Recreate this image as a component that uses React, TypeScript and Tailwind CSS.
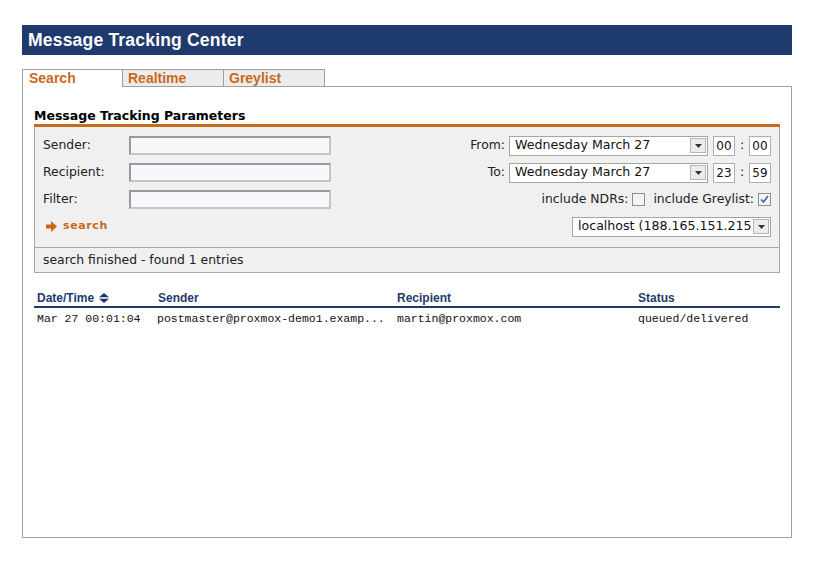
import React from "react";

const labelFont = "font-['DejaVu_Sans',sans-serif] text-[12.4px] text-[#222]";

function DropButton() {
  return (
    <div className="flex h-[15px] w-[16px] items-center justify-center border border-[#b5b5b5] bg-[#ececec]">
      <svg width="7" height="4" viewBox="0 0 7 4">
        <path d="M0 0 L7 0 L3.5 4 Z" fill="#333" />
      </svg>
    </div>
  );
}

function Select({ value, width }: { value: string; width: string }) {
  return (
    <div
      className={`flex h-[20px] items-center justify-between border border-[#a5a5a5] bg-white pl-[5px] pr-[1px] ${width} font-['DejaVu_Sans',sans-serif] text-[12.6px] text-[#111]`}
    >
      <span className="whitespace-nowrap">{value}</span>
      <DropButton />
    </div>
  );
}

function TimeBox({ value }: { value: string }) {
  return (
    <div className="flex h-[20px] w-[22px] items-center justify-center border border-[#b0b0b0] bg-white font-['DejaVu_Sans',sans-serif] text-[12px] text-[#111]">
      {value}
    </div>
  );
}

function TextInput() {
  return (
    <div className="h-[19px] w-[202px] border-2 border-t-[#9a9a9a] border-l-[#9a9a9a] border-r-[#c4c4c4] border-b-[#c4c4c4] bg-[#f6f8fc]" />
  );
}

function Checkbox({ checked }: { checked?: boolean }) {
  return (
    <div className="flex h-[13px] w-[13px] items-center justify-center border border-[#8e8e8e] bg-[#f4f4f4]">
      {checked && (
        <svg width="9" height="9" viewBox="0 0 9 9">
          <path d="M1 4.5 L3.5 7 L8 1" stroke="#4a5fa8" strokeWidth="1.6" fill="none" />
        </svg>
      )}
    </div>
  );
}

function SortIcon() {
  return (
    <svg width="10" height="10" viewBox="0 0 10 10" className="ml-[5px]">
      <path d="M5 0 L10 4.2 L0 4.2 Z" fill="#1f3a6c" />
      <path d="M0 5.8 L10 5.8 L5 10 Z" fill="#1f3a6c" />
    </svg>
  );
}

export default function App() {
  return (
    <div className="min-h-[588px] w-[837px] bg-white pl-[22px] pt-[25px]">
      <div className="w-[770px]">
        <div className="flex h-[30px] items-center bg-[#1f3a6c] pl-[6px] font-['Liberation_Sans',sans-serif] text-[17.5px] font-bold tracking-[0.2px] text-white">
          Message Tracking Center
        </div>

        <div className="mt-[14px] flex h-[18px] font-['Liberation_Sans',sans-serif] text-[14px] font-bold text-[#c8691c]">
          <div className="relative z-10 flex h-[18px] w-[100px] items-center border-l border-t border-[#a0a0a0] bg-white pl-[6px]">
            Search
          </div>
          <div className="flex h-[18px] w-[102px] items-center border border-[#a0a0a0] bg-[#ececec] pl-[5px]">
            Realtime
          </div>
          <div className="flex h-[18px] w-[101px] items-center border border-l-0 border-[#a0a0a0] bg-[#ececec] pl-[5px]">
            Greylist
          </div>
        </div>

        <div className="-mt-px h-[452px] border border-[#a0a0a0] px-[11px] pt-[21px]">
          <div className="font-['DejaVu_Sans',sans-serif] text-[12.5px] font-bold leading-[16px] text-black">
            Message Tracking Parameters
          </div>
          <div className="h-[3px] bg-[#c8691c]" />
          <div className="border border-t-0 border-[#a8a8a8] bg-[#f0f0f0]">
            <div className="px-[8px] pb-[7px] pt-[5px]">
              <div className="flex h-[27px] items-center justify-between">
                <div className="flex items-center">
                  <span className={`w-[86px] ${labelFont}`}>Sender:</span>
                  <TextInput />
                </div>
                <div className="flex items-center">
                  <span className={`mr-[4px] ${labelFont}`}>From:</span>
                  <Select value="Wednesday March 27" width="w-[199px]" />
                  <div className="ml-[5px]">
                    <TimeBox value="00" />
                  </div>
                  <span className={`w-[14px] text-center ${labelFont}`}>:</span>
                  <TimeBox value="00" />
                </div>
              </div>
              <div className="flex h-[27px] items-center justify-between">
                <div className="flex items-center">
                  <span className={`w-[86px] ${labelFont}`}>Recipient:</span>
                  <TextInput />
                </div>
                <div className="flex items-center">
                  <span className={`mr-[4px] ${labelFont}`}>To:</span>
                  <Select value="Wednesday March 27" width="w-[199px]" />
                  <div className="ml-[5px]">
                    <TimeBox value="23" />
                  </div>
                  <span className={`w-[14px] text-center ${labelFont}`}>:</span>
                  <TimeBox value="59" />
                </div>
              </div>
              <div className="flex h-[27px] items-center justify-between">
                <div className="flex items-center">
                  <span className={`w-[86px] ${labelFont}`}>Filter:</span>
                  <TextInput />
                </div>
                <div className="flex items-center">
                  <span className={`mr-[4px] ${labelFont}`}>include NDRs:</span>
                  <Checkbox />
                  <span className={`ml-[8px] mr-[4px] ${labelFont}`}>include Greylist:</span>
                  <Checkbox checked />
                </div>
              </div>
              <div className="flex h-[27px] items-center justify-between">
                <div className="flex items-center pl-[3px] font-['DejaVu_Sans',sans-serif] text-[11px] font-bold tracking-[0.6px] text-[#c8691c]">
                  <svg width="11" height="11" viewBox="0 0 11 11" className="mr-[6px]">
                    <path d="M0 3.5 L5 3.5 L5 0 L11 5.5 L5 11 L5 7.5 L0 7.5 Z" fill="#c8691c" />
                  </svg>
                  search
                </div>
                <Select value="localhost (188.165.151.215" width="w-[199px]" />
              </div>
            </div>
            <div className={`flex h-[25px] items-center border-t border-[#a8a8a8] pl-[8px] ${labelFont}`}>
              search finished - found 1 entries
            </div>
          </div>

          <div className="mt-[17px] flex h-[18px] items-center border-b-2 border-[#1f3a6c] pb-[1px] font-['Liberation_Sans',sans-serif] text-[12px] font-bold text-[#1f3a6c]">
            <div className="flex w-[121px] items-center pl-[3px]">
              Date/Time
              <SortIcon />
            </div>
            <div className="w-[239px] pl-[3px]">Sender</div>
            <div className="w-[241px] pl-[3px]">Recipient</div>
            <div className="pl-[3px]">Status</div>
          </div>
          <div className="flex h-[22px] items-center font-['Liberation_Mono',monospace] text-[11.5px] text-[#111]">
            <div className="w-[121px] pl-[3px]">Mar 27 00:01:04</div>
            <div className="w-[239px] pl-[2px]">postmaster@proxmox-demo1.examp...</div>
            <div className="w-[241px] pl-[3px]">martin@proxmox.com</div>
            <div className="pl-[3px]">queued/delivered</div>
          </div>
        </div>
      </div>
    </div>
  );
}
